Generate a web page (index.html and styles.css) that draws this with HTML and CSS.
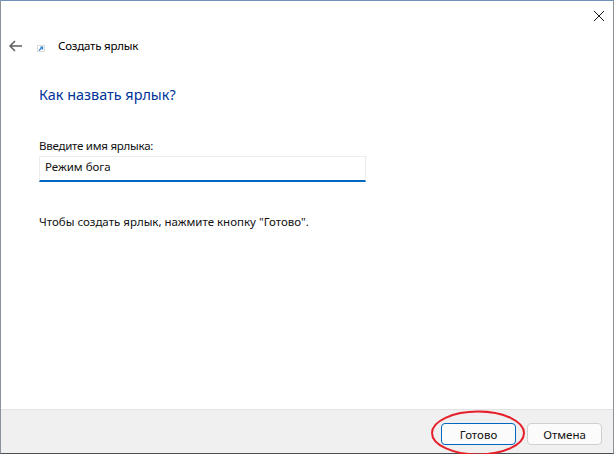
FILE: index.html
```html
<!DOCTYPE html>
<html lang="ru">
<head>
    <meta charset="UTF-8">
    <meta name="viewport" content="width=device-width, initial-scale=1.0">
    <title>Создать ярлык</title>
    <link rel="stylesheet" href="styles.css">
</head>
<body>
    <div class="window">
        <div class="title-bar">
            <button class="close-button" aria-label="Закрыть">
                <svg width="10" height="10" viewBox="0 0 10 10"><path d="M0 0L10 10M10 0L0 10" stroke="#1a1a1a" stroke-width="1" fill="none"/></svg>
            </button>
        </div>
        <div class="nav-row">
            <svg class="back-arrow" width="13" height="12" viewBox="0 0 13 12"><path d="M13 6H1M6 1L1 6L6 11" stroke="#5f5f5f" stroke-width="1.5" fill="none"/></svg>
            <svg class="shortcut-icon" width="8" height="7" viewBox="0 0 8 7"><rect x="0.5" y="0.5" width="7" height="6" fill="#fff" stroke="#dcdcdc"/><path d="M2 5.5L5 2.5M3.4 2.2H5.6V4.4" stroke="#2f80d0" stroke-width="1.2" fill="none"/></svg>
            <span class="wizard-title">Создать ярлык</span>
        </div>
        <div class="content">
            <h1 class="heading">Как назвать ярлык?</h1>
            <label class="field-label" for="name-input">Введите имя ярлыка:</label>
            <input class="name-input" id="name-input" type="text" value="Режим бога">
            <p class="hint">Чтобы создать ярлык, нажмите кнопку "Готово".</p>
        </div>
        <div class="footer">
            <div class="ready-wrap">
                <button class="btn btn-primary">Готово</button>
                <svg class="red-circle" width="96" height="46" viewBox="0 0 96 46"><ellipse cx="48" cy="23" rx="46" ry="21.5" fill="none" stroke="#e5202a" stroke-width="2"/></svg>
            </div>
            <button class="btn">Отмена</button>
        </div>
    </div>
</body>
</html>
```

FILE: styles.css
```css
html, body {
    margin: 0;
    padding: 0;
}
body {
    width: 614px;
    height: 454px;
    overflow: hidden;
    font-family: 'Noto Sans', sans-serif;
    font-size: 11.5px;
    color: #111;
    background-color: #ffffff;
}
.window {
    box-sizing: border-box;
    width: 614px;
    height: 454px;
    display: flex;
    flex-direction: column;
    border: 1px solid #8a9199;
    border-top-color: #6f93b8;
    border-bottom-color: #4a4f55;
}
.title-bar {
    height: 29px;
    display: flex;
    justify-content: flex-end;
}
.close-button {
    width: 28px;
    height: 29px;
    padding: 0;
    border: none;
    background: none;
    display: flex;
    align-items: center;
    justify-content: center;
}
.nav-row {
    height: 32px;
    display: flex;
    align-items: center;
}
.back-arrow {
    margin-left: 8px;
}
.shortcut-icon {
    margin-left: 15px;
    margin-top: 5px;
}
.wizard-title {
    margin-left: 13px;
    margin-top: -1px;
    color: #000;
    letter-spacing: -0.2px;
}
.content {
    flex-grow: 1;
    padding-left: 38px;
    display: flex;
    flex-direction: column;
    align-items: flex-start;
}
.heading {
    margin: 23px 0 0 0;
    font-size: 14.4px;
    font-weight: normal;
    line-height: 20px;
    color: #003399;
}
.field-label {
    margin-top: 32px;
    line-height: 17px;
    letter-spacing: -0.25px;
}
.name-input {
    box-sizing: border-box;
    width: 327px;
    height: 26px;
    margin-top: 2px;
    padding: 0 5px 5px;
    font-family: inherit;
    font-size: 11.5px;
    color: #111;
    background-color: #fff;
    border: 1px solid #ececec;
    border-bottom: 2px solid #0067c0;
    outline: none;
}
.hint {
    margin: 31px 0 0 0;
    line-height: 17px;
}
.footer {
    height: 44px;
    box-sizing: border-box;
    background-color: #f0f0f0;
    border-top: 1px solid #e3e3e3;
    padding: 13px 11px 0 0;
    display: flex;
    justify-content: flex-end;
    align-items: flex-start;
    gap: 11px;
}
.ready-wrap {
    position: relative;
    display: flex;
}
.btn {
    box-sizing: border-box;
    width: 75px;
    height: 22px;
    padding: 0;
    font-family: inherit;
    font-size: 11.5px;
    color: #111;
    background-color: #fbfbfb;
    border: 1px solid #d0d0d0;
    border-radius: 4px;
}
.btn-primary {
    border-color: #0067c0;
}
.red-circle {
    position: absolute;
    left: -11px;
    top: -13px;
}
```
